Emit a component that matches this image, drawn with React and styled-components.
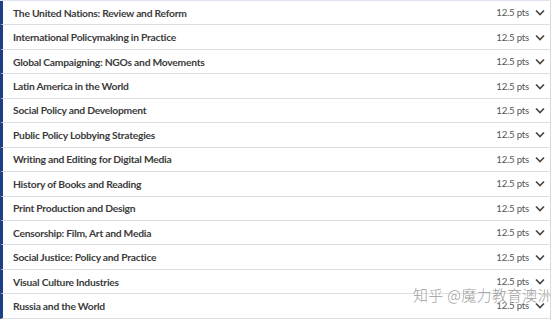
import React from "react";
import styled, { createGlobalStyle } from "styled-components";

const GlobalStyle = createGlobalStyle`
  html, body {
    margin: 0;
    padding: 0;
    background: #fff;
    overflow: hidden;
  }
`;

const Page = styled.div`
  position: relative;
  width: 551px;
  height: 320px;
  overflow: hidden;
  border-top: 1px solid #dfe4ee;
  border-right: 1px solid #d6d9de;
  font-family: Lato, "Noto Sans", sans-serif;
  box-sizing: border-box;
`;

const List = styled.ul`
  list-style: none;
  margin: 0;
  padding: 0;
`;

const Row = styled.li`
  display: flex;
  align-items: center;
  height: 24.45px;
  box-sizing: border-box;
  border-bottom: 1px solid #dcdfe3;
  border-left: 3px solid #1d3f86;
  padding: 0 5px 0 10px;
`;

const Title = styled.span`
  flex: 1;
  font-size: 10.3px;
  font-weight: 700;
  letter-spacing: -0.25px;
  color: #3b3b3b;
`;

const Points = styled.span`
  font-size: 9.6px;
  letter-spacing: -0.2px;
  color: #555;
  margin-right: 6px;
`;

const Chevron = styled.svg`
  width: 10px;
  height: 7px;
`;

const Watermark = styled.div`
  position: absolute;
  left: 413px;
  top: 283px;
  font-family: "Noto Sans CJK SC", sans-serif;
  font-size: 15px;
  font-weight: 300;
  color: rgba(130, 130, 130, 0.8);
  letter-spacing: 0.3px;
  text-shadow: 0 0 2px #fff, 0 0 2px #fff;
  white-space: nowrap;
`;

const courses = [
  "The United Nations: Review and Reform",
  "International Policymaking in Practice",
  "Global Campaigning: NGOs and Movements",
  "Latin America in the World",
  "Social Policy and Development",
  "Public Policy Lobbying Strategies",
  "Writing and Editing for Digital Media",
  "History of Books and Reading",
  "Print Production and Design",
  "Censorship: Film, Art and Media",
  "Social Justice: Policy and Practice",
  "Visual Culture Industries",
  "Russia and the World",
];

export default function App() {
  return (
    <>
      <GlobalStyle />
      <Page>
        <List>
          {courses.map((c) => (
            <Row key={c}>
              <Title>{c}</Title>
              <Points>12.5 pts</Points>
              <Chevron viewBox="0 0 10 7">
                <path d="M1 1.5 L5 5.5 L9 1.5" fill="none" stroke="#444" strokeWidth="1.6" />
              </Chevron>
            </Row>
          ))}
        </List>
        <Watermark>知乎 @魔力教育澳洲</Watermark>
      </Page>
    </>
  );
}
